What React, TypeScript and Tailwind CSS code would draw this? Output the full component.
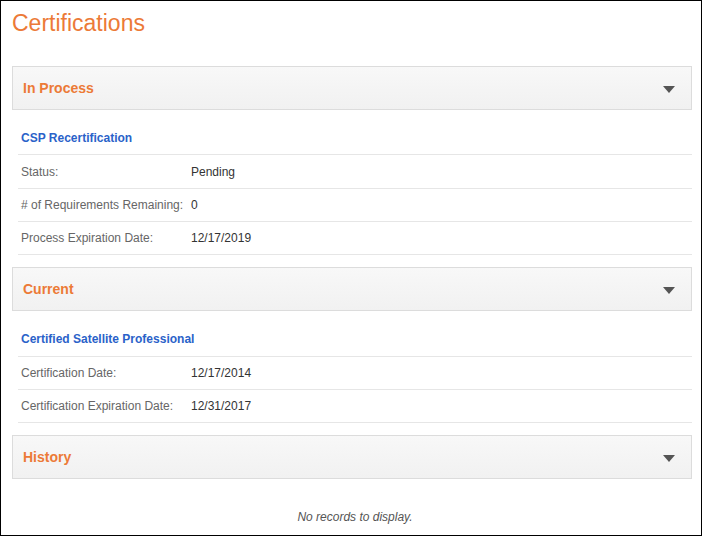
import React from 'react';

type Row = { label: string; value: string };

function Caret() {
  return (
    <svg width="12" height="7" viewBox="0 0 12 7" className="block">
      <polygon points="0,0 12,0 6,7" fill="#555555" />
    </svg>
  );
}

function SectionHeader({ title }: { title: string }) {
  return (
    <div className="flex items-center justify-between h-[44px] box-border border border-[#dcdcdc] bg-gradient-to-b from-[#f8f8f8] to-[#f1f1f1] pl-[10px] pr-[16px]">
      <span className="text-[14px] leading-[16px] font-bold text-[#ec7a37]">{title}</span>
      <span className="mt-[3px]">
        <Caret />
      </span>
    </div>
  );
}

function Record({ name, rows, titleClass }: { name: string; rows: Row[]; titleClass: string }) {
  return (
    <div className="ml-[6px]">
      <div className={`${titleClass} box-border border-b border-[#e6e6e6] pl-[3px] flex items-end`}>
        <span className="text-[12px] leading-[14px] font-bold text-[#2a62c9]">{name}</span>
      </div>
      {rows.map((r, i) => (
        <div
          key={r.label}
          className={`${i === 0 && rows.length === 3 ? 'h-[34px]' : 'h-[33px]'} box-border border-b border-[#e6e6e6] pl-[3px] flex items-center text-[12px] leading-[14px]`}
        >
          <span className="w-[170px] text-[#666666]">{r.label}</span>
          <span className="text-[#333333]">{r.value}</span>
        </div>
      ))}
    </div>
  );
}

export default function App() {
  return (
    <div
      className="w-[702px] h-[536px] box-border border border-black bg-white overflow-hidden"
      style={{ fontFamily: '"Liberation Sans", Arial, sans-serif' }}
    >
      <div className="pl-[11px] pr-[9px]">
        <h1 className="mt-[8px] text-[23px] leading-[28px] font-normal text-[#ec7a37]">Certifications</h1>

        <div className="mt-[29px]">
          <SectionHeader title="In Process" />
          <Record
            name="CSP Recertification"
            titleClass="h-[45px] pb-[9px]"
            rows={[
              { label: 'Status:', value: 'Pending' },
              { label: '# of Requirements Remaining:', value: '0' },
              { label: 'Process Expiration Date:', value: '12/17/2019' },
            ]}
          />
        </div>

        <div className="mt-[12px]">
          <SectionHeader title="Current" />
          <Record
            name="Certified Satellite Professional"
            titleClass="h-[46px] pb-[10px]"
            rows={[
              { label: 'Certification Date:', value: '12/17/2014' },
              { label: 'Certification Expiration Date:', value: '12/31/2017' },
            ]}
          />
        </div>

        <div className="mt-[12px]">
          <SectionHeader title="History" />
          <div className="ml-[6px] pt-[31px] text-center text-[12px] leading-[14px] italic text-[#555555]">
            No records to display.
          </div>
        </div>
      </div>
    </div>
  );
}
